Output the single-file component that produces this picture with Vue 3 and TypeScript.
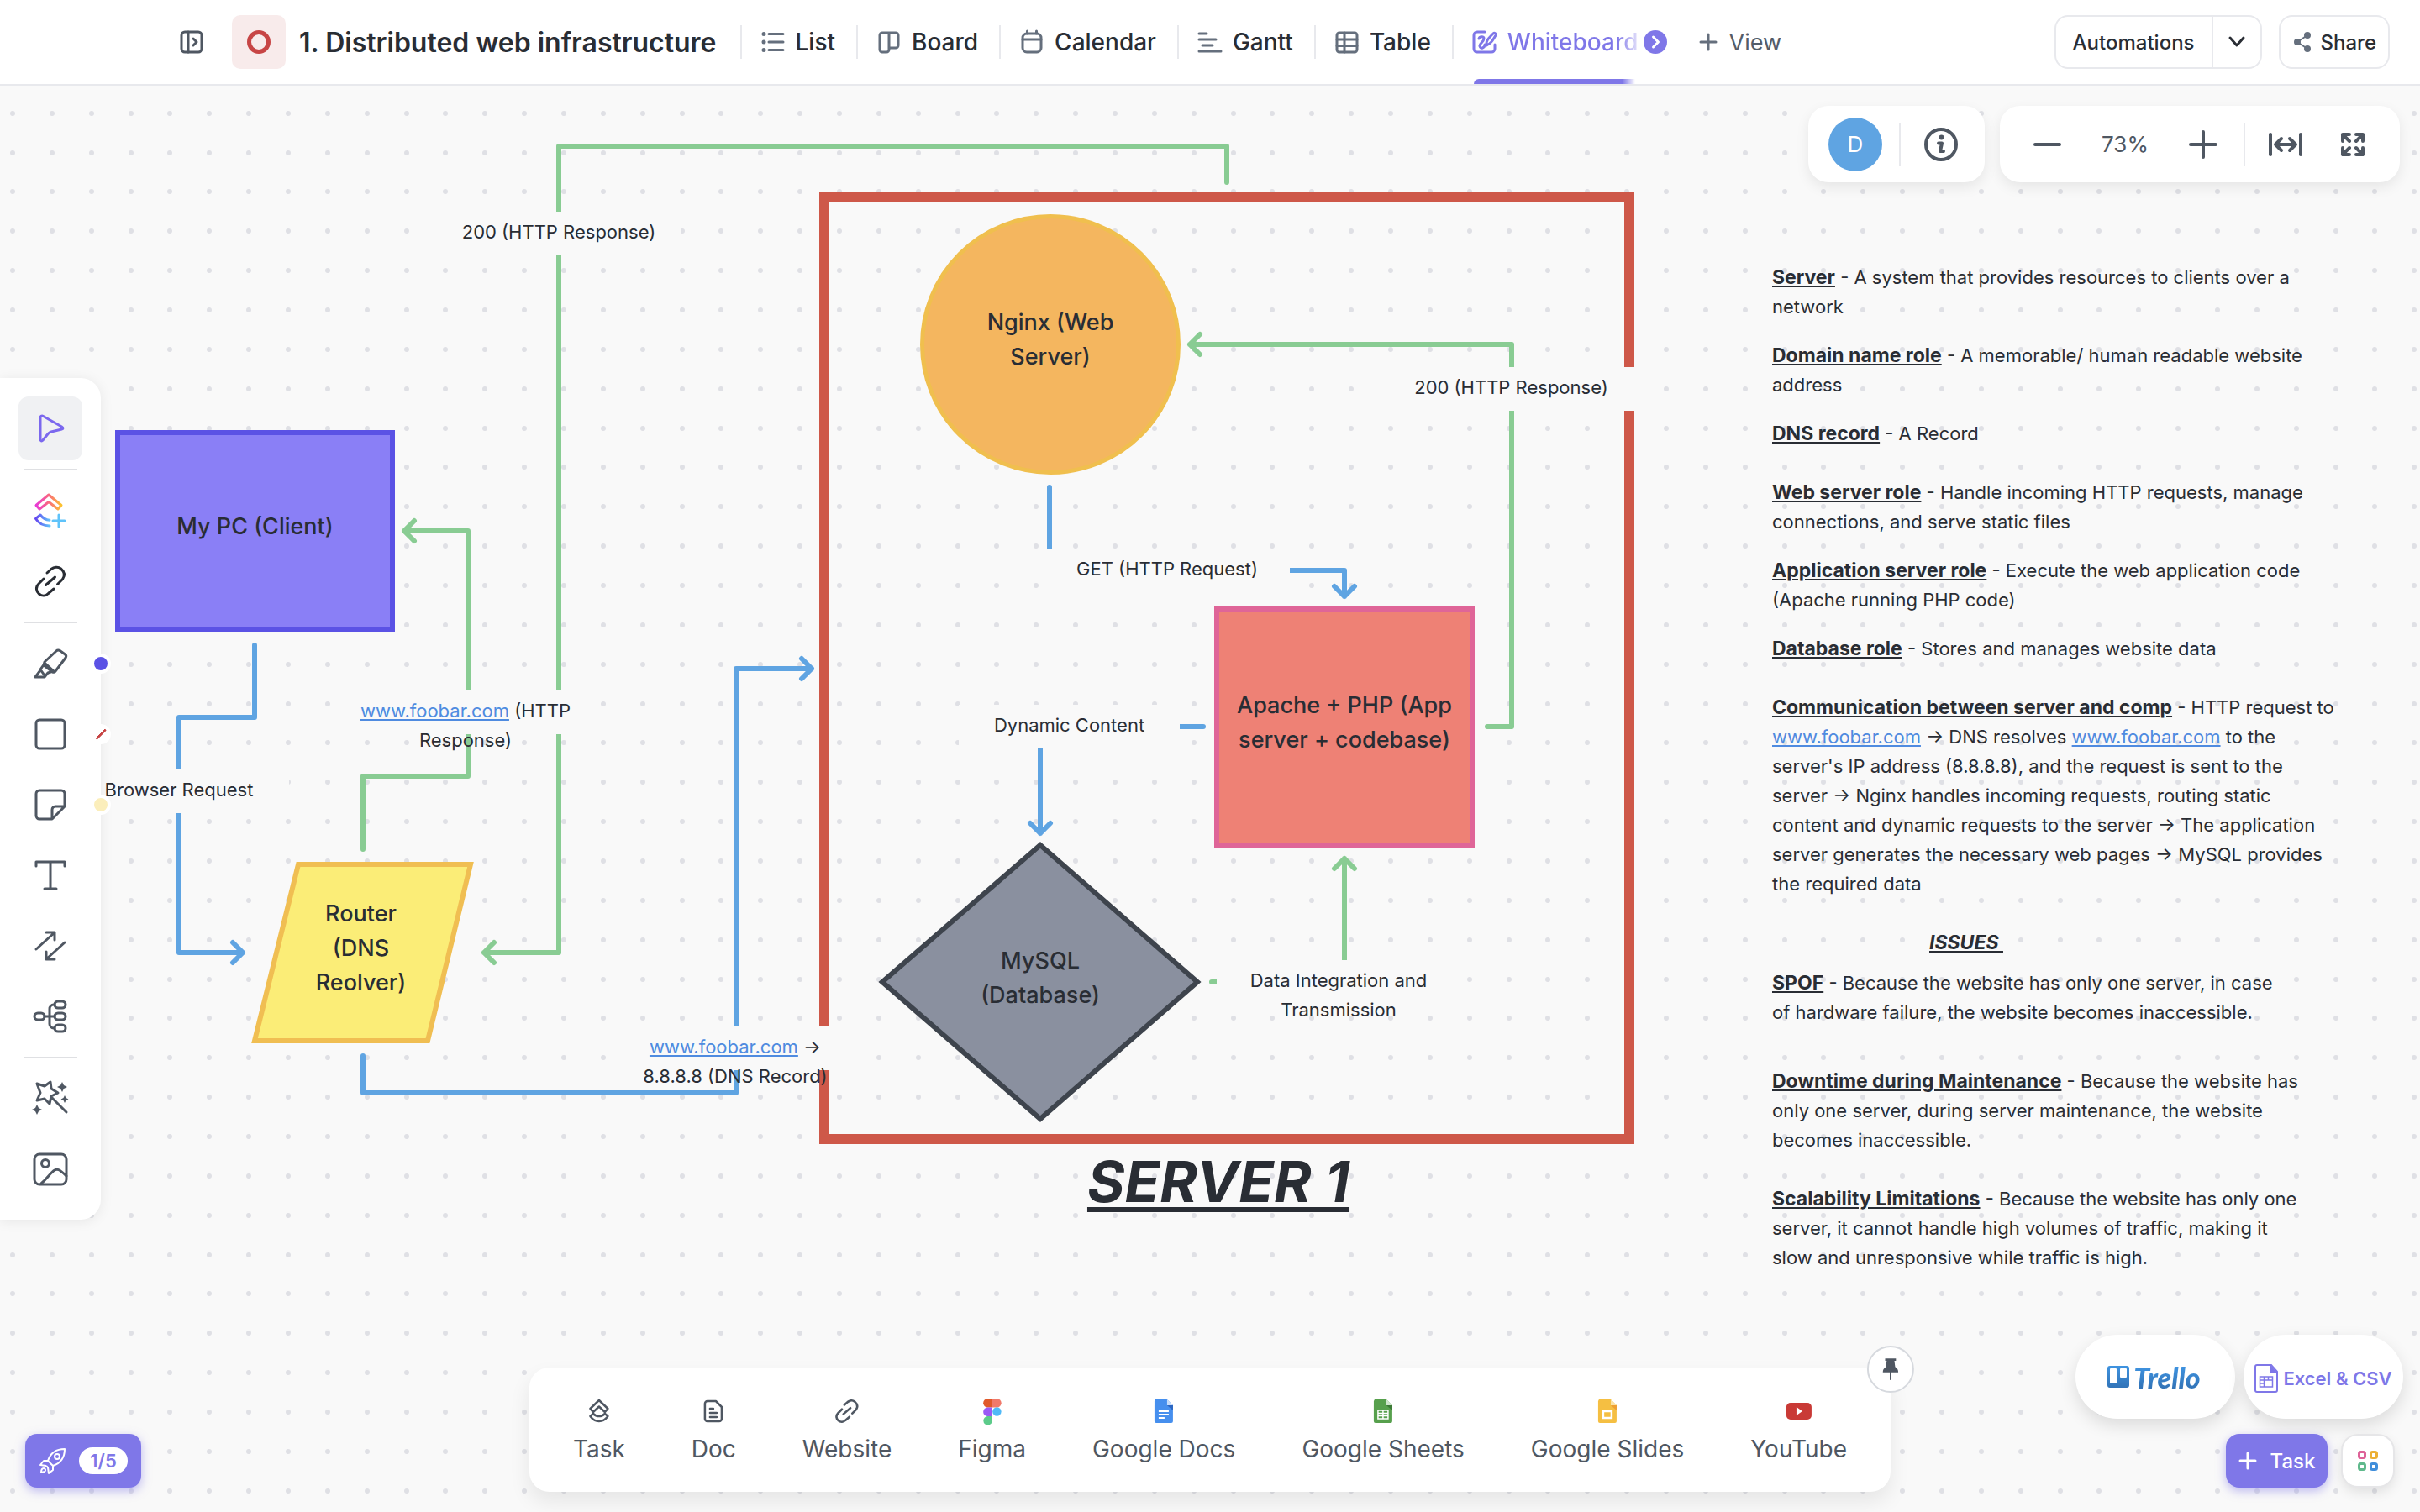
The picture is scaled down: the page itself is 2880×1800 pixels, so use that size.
<script setup lang="ts">
interface Tab {
  name: string
  icon: string
}

interface Label {
  x: number
  y: number
  w: number
  lines: { text: string; link?: boolean }[][]
}

interface Node {
  id: string
  x: number
  y: number
  w: number
  h: number
  lines: string[]
}

const tabs: Tab[] = [
  { name: 'List', icon: 'list' },
  { name: 'Board', icon: 'board' },
  { name: 'Calendar', icon: 'calendar' },
  { name: 'Gantt', icon: 'gantt' },
  { name: 'Table', icon: 'table' },
]

const tabIcons: Record<string, string> = {
  list: '<path d="M10 5.500h17M10 15h17M10 24.500h17"/><g fill="currentColor" stroke="none"><circle cx="4" cy="5.500" r="2.500"/><circle cx="4" cy="15" r="2.500"/><circle cx="4" cy="24.500" r="2.500"/></g>',
  board: '<path d="M7 4h16a3 3 0 0 1 3 3v12a3 3 0 0 1-3 3h-8v2a3 3 0 0 1-3 3H7a3 3 0 0 1-3-3V7a3 3 0 0 1 3-3zM15 4v18"/>',
  calendar: '<rect x="4" y="5" width="22" height="22" rx="5"/><path d="M4 12h22M9.500 2v3M20.500 2v3"/>',
  gantt: '<path d="M2 5h9M2 12h20M6 19h12M2 26h26"/>',
  table: '<rect x="3" y="4" width="24" height="23" rx="3"/><path d="M3 12h24M3 19.500h24M12 4v23"/>',
}

const tools: { name: string; group: number; swatch?: string }[] = [
  { name: 'select', group: 0 },
  { name: 'clickup', group: 1 },
  { name: 'link', group: 1 },
  { name: 'pen', group: 2, swatch: 'violet' },
  { name: 'shape', group: 2, swatch: 'none' },
  { name: 'note', group: 2, swatch: 'sand' },
  { name: 'text', group: 2 },
  { name: 'connector', group: 2 },
  { name: 'mindmap', group: 2 },
  { name: 'magic', group: 3 },
  { name: 'image', group: 3 },
]
const toolGroups = [0, 1, 2, 3].map((g) => tools.filter((t) => t.group === g))

const chain =
  '<path d="m16 10 5-4.500C24 3 29 2 32.500 5s5.500 7.500 2 12.500l-6 6M12 17l-6 6c-4 4-3 9 .5 12s8 2.500 11-.5l6.500-5.500M14.500 24.500l11-9.500"/>'

const toolIcons: Record<string, string> = {
  select: '<path stroke="#7b68ee" d="M8 7.500c0-2 1.500-3 3.500-2l22 12.500c2 1.200 2 2.500 0 3L21 24c-1.500.4-2.500 1-3.500 2L11 34c-1.300 1.500-3 1-3-1z"/>',
  clickup:
    '<defs><linearGradient id="cu-top" x1="0" x2="1"><stop stop-color="#e83ad6"/><stop offset=".5" stop-color="#f9687f"/><stop offset="1" stop-color="#fcc22f"/></linearGradient><linearGradient id="cu-low" x1="0" x2="1"><stop stop-color="#6647f0"/><stop offset="1" stop-color="#5fc3fa"/></linearGradient></defs><path stroke="url(#cu-top)" d="M3 13.500 18 1l15 12.500-4 4.500L18 9.500 7 18z"/><path stroke="url(#cu-low)" d="M19 38C12 38 6 35 2.500 29.500L8 25c3 4 6.500 6 11 6.200"/><path stroke="#5fc3fa" d="M30 25v14M23 32h14"/>',
  link: `<g stroke="#292d34">${chain}</g>`,
  pen: '<path d="m13 18 14-13c1-1 3-1.200 4.500-.4l6 4.400c1.500 1.200 1.500 2.600.6 4L26 29c-1 1.300-2.500 1.500-4 .6l-8-6c-1.500-1.300-1.800-3.700-1-5.600zM13 20l-5 7 5 7M8 28l-6 8h11l4-5 5-1.500M13 19l11 10"/>',
  shape: '<rect x="3" y="3" width="34" height="34" rx="4"/>',
  note: '<path d="M7 3h26a4 4 0 0 1 4 4v15L22 37H7a4 4 0 0 1-4-4V7a4 4 0 0 1 4-4zM22 36V26a4 4 0 0 1 4-4h10"/>',
  text: '<path d="M3 9V4h34v5M20 4v32M13 36h14"/>',
  connector: '<path d="M3 24 24 5M15 4h10v9M37 16 16 35M25 36H15v-9"/>',
  mindmap:
    '<rect x="1" y="16" width="12" height="8" rx="4"/><rect x="25" y="2" width="13" height="8" rx="4"/><rect x="25" y="16" width="13" height="8" rx="4"/><rect x="25" y="30" width="13" height="8" rx="4"/><path d="M13 20h12M25 6h-1a5 5 0 0 0-5 5v18a5 5 0 0 0 5 5h1"/>',
  magic:
    '<path d="m4 2 9 3 7-5 1 8 8 5-8 4-2 9-6-6-9 2 4-9zM22 19l17 17"/><g fill="#4f5762" stroke="none"><path d="m34 0 2 4 4 2-4 2-2 4-2-4-4-2 4-2zM37 16l1.500 3 3 1.500-3 1.500-1.500 3-1.500-3-3-1.500 3-1.500zM4 27l2 4 4 2-4 2-2 4-2-4-4-2 4-2z"/></g>',
  image: '<rect x="1" y="2" width="38" height="36" rx="6"/><circle cx="14" cy="13" r="4.500"/><path d="M9 37c8-7 11-13 16-16 3-2 6-1 14 7"/>',
}

const labels: Label[] = [
  { x: 519, y: 252, w: 292, lines: [[{ text: '200 (HTTP Response)' }]] },
  { x: 82, y: 916, w: 262, lines: [[{ text: 'Browser Request' }]] },
  {
    x: 410, y: 822, w: 288,
    lines: [[{ text: 'www.foobar.com', link: true }, { text: ' (HTTP' }], [{ text: 'Response)' }]],
  },
  {
    x: 730, y: 1222, w: 290,
    lines: [[{ text: 'www.foobar.com', link: true }, { text: ' →' }], [{ text: '8.8.8.8 (DNS Record)' }]],
  },
  { x: 1652, y: 437, w: 293, lines: [[{ text: '200 (HTTP Response)' }]] },
  { x: 1243, y: 653, w: 292, lines: [[{ text: 'GET (HTTP Request)' }]] },
  { x: 1141, y: 839, w: 263, lines: [[{ text: 'Dynamic Content' }]] },
  { x: 1448, y: 1143, w: 290, lines: [[{ text: 'Data Integration and' }], [{ text: 'Transmission' }]] },
]

const nodes: Node[] = [
  { id: 'client', x: 137, y: 512, w: 333, h: 240, lines: ['My PC (Client)'] },
  { id: 'nginx', x: 1095, y: 255, w: 310, h: 310, lines: ['Nginx (Web', 'Server)'] },
  { id: 'apache', x: 1445, y: 722, w: 310, h: 287, lines: ['Apache + PHP (App', 'server + codebase)'] },
  { id: 'router', x: 297, y: 1026, w: 265, h: 216, lines: ['Router', '(DNS', 'Reolver)'] },
  { id: 'mysql', x: 1046, y: 1002, w: 384, h: 336, lines: ['MySQL', '(Database)'] },
]

const bluePaths = [
  'M303 768V854H213V1134H289M277 1122l12 12-12 12',
  'M432 1257V1301H876V796H966M954 784l12 12-12 12',
  'M1249 580V679H1600V710M1588 698l12 12 12-12',
  'M1432 865H1238V992M1226 980l12 12 12-12',
]
const greenPaths = [
  'M432 1011V924H557V632H481M493 620l-12 12 12 12',
  'M1460 217V174H665V1134H576M588 1122l-12 12 12 12',
  'M1770 865H1799V410H1416M1428 398l-12 12 12 12',
  'M1442 1169H1600V1022M1588 1034l12-12 12 12',
]

// One tile of the grid holds 7 × 7 dots.
const dotSteps = [0, 47, 94, 141, 187, 234, 281]
const dots = dotSteps.flatMap((y) => dotSteps.map((x) => ({ x: x + 15, y: y + 41 })))

const shortcuts: { name: string; icon: string }[] = [
  {
    name: 'Task',
    icon: '<g fill="none" stroke="#4f5762" stroke-width="2.500" stroke-linejoin="round" stroke-linecap="round"><path d="M4.500 12 15 2l10.500 10-3.500 4-7-6.500L8 16z"/><path d="m4.500 21 3.500-3c4 4 10 4 14 0l3.500 3c-6 8-15 8-21 0z"/></g>',
  },
  {
    name: 'Doc',
    icon: '<g fill="none" stroke="#4f5762" stroke-width="2.500" stroke-linejoin="round" stroke-linecap="round"><path d="M8 3h10l7 7v14a3 3 0 0 1-3 3H8a3 3 0 0 1-3-3V6a3 3 0 0 1 3-3zM11 12h4M11 17h8M11 22h8"/></g>',
  },
  {
    name: 'Website',
    icon: `<g fill="none" stroke="#4f5762" stroke-width="3.500" stroke-linecap="round" transform="scale(.75)">${chain}</g>`,
  },
  {
    name: 'Figma',
    icon: '<path fill="#e0592a" d="M15 0H9.500a5.200 5.200 0 0 0 0 10.500H15z"/><path fill="#f0796a" d="M15 0h5.500a5.200 5.200 0 0 1 0 10.500H15z"/><path fill="#9a59f5" d="M15 10.500H9.500a5.200 5.200 0 0 0 0 10.500H15z"/><circle cx="20.500" cy="15.500" r="5.200" fill="#4fb9f7"/><path fill="#5ccb8a" d="M9.500 21H15v5a5.300 5.300 0 1 1-5.500-5z"/>',
  },
  {
    name: 'Google Docs',
    icon: '<path fill="#468fee" d="M5 1h14l7 7v19a2 2 0 0 1-2 2H6a2 2 0 0 1-2-2V3z"/><path fill="#c7dcfa" d="M19 1l7 7h-7z"/><path fill="#2c66c2" d="M19 8h7v6z"/><path stroke="#fff" stroke-width="2" d="M9 15h12M9 19h12M9 23h7"/>',
  },
  {
    name: 'Google Sheets',
    icon: '<path fill="#57a04d" d="M5 1h14l7 7v19a2 2 0 0 1-2 2H6a2 2 0 0 1-2-2V3z"/><path fill="#cfe5cc" d="M19 1l7 7h-7z"/><path fill="#3c7a36" d="M19 8h7v6z"/><path fill="none" stroke="#fff" stroke-width="1.500" d="M9 14h12v10H9zM9 17.500h12M9 20.500h12M15 14v10"/>',
  },
  {
    name: 'Google Slides',
    icon: '<path fill="#f5bf42" d="M5 1h14l7 7v19a2 2 0 0 1-2 2H6a2 2 0 0 1-2-2V3z"/><path fill="#fbe3a8" d="M19 1l7 7h-7z"/><path fill="#ee9f33" d="M19 8h7v6z"/><rect x="10" y="15" width="10" height="8" fill="none" stroke="#fff" stroke-width="2.500"/>',
  },
  {
    name: 'YouTube',
    icon: '<rect x="0" y="5" width="30" height="20" rx="5" fill="#c93a36"/><path fill="#fff" d="M12 10l7 5-7 5z"/>',
  },
]
</script>

<template>
  <div class="app">
    <main class="board">
      <svg class="drawing" aria-hidden="true">
        <defs>
          <pattern id="dot-grid" width="328" height="328" patternUnits="userSpaceOnUse">
            <circle v-for="(d, i) in dots" :key="i" :cx="d.x" :cy="d.y" r="3" fill="#dfe0e5" />
          </pattern>
        </defs>
        <rect width="100%" height="100%" fill="url(#dot-grid)" />
        <rect x="981" y="235" width="958" height="1121" class="frame" />
        <g class="wire blue"><path v-for="p in bluePaths" :key="p" :d="p" /></g>
        <g class="wire green"><path v-for="p in greenPaths" :key="p" :d="p" /></g>
        <polygon class="router" points="355,1029 560,1029 509,1239 303,1239" />
        <polygon class="mysql" points="1238,1006 1425,1169 1238,1332 1050,1169" />
      </svg>

      <div
        v-for="n in nodes"
        :key="n.id"
        :class="['node', n.id]"
        :style="{ left: n.x + 'px', top: n.y + 'px', width: n.w + 'px', height: n.h + 'px' }"
      >
        <span v-for="l in n.lines" :key="l">{{ l }}</span>
      </div>

      <div
        v-for="(label, i) in labels"
        :key="i"
        class="label"
        :style="{ left: label.x + 'px', top: label.y + 'px', width: label.w + 'px' }"
      >
        <span v-for="(line, j) in label.lines" :key="j" class="line">
          <template v-for="part in line" :key="part.text">
            <a v-if="part.link" href="#">{{ part.text }}</a>
            <template v-else>{{ part.text }}</template>
          </template>
        </span>
      </div>

      <h2 class="server-name">SERVER 1</h2>

      <article class="notes">
        <section>
          <p><b>Server</b> - A system that provides resources to clients over a<br />network</p>
          <p><b>Domain name role</b> - A memorable/ human readable website<br />address</p>
          <p><b>DNS record</b> - A Record</p>
        </section>
        <section>
          <p><b>Web server role</b> - Handle incoming HTTP requests, manage<br />connections, and serve static files</p>
          <p><b>Application server role</b> - Execute the web application code<br />(Apache running PHP code)</p>
          <p><b>Database role</b> - Stores and manages website data</p>
        </section>
        <section>
          <p>
            <b>Communication between server and comp</b> - HTTP request to<br />
            <a href="#">www.foobar.com</a> → DNS resolves <a href="#">www.foobar.com</a> to the<br />
            server's IP address (8.8.8.8), and the request is sent to the<br />
            server → Nginx handles incoming requests, routing static<br />
            content and dynamic requests to the server → The application<br />
            server generates the necessary web pages → MySQL provides<br />
            the required data
          </p>
        </section>
        <section class="issues">
          <h3>ISSUES&nbsp;</h3>
          <p><b>SPOF</b> - Because the website has only one server, in case<br />of hardware failure, the website becomes inaccessible.</p>
        </section>
        <section class="later">
          <p><b>Downtime during Maintenance</b> - Because the website has<br />only one server, during server maintenance, the website<br />becomes inaccessible.</p>
        </section>
        <section>
          <p><b>Scalability Limitations</b> - Because the website has only one<br />server, it cannot handle high volumes of traffic, making it<br />slow and unresponsive while traffic is high.</p>
        </section>
      </article>
    </main>

    <header class="topbar">
      <button class="plain toggle" aria-label="Open sidebar">
        <svg viewBox="0 0 30 30"><rect x="3" y="3" width="24" height="24" rx="4" /><path d="M11 3v24M17 11l4 4-4 4" /></svg>
      </button>
      <button class="status" aria-label="List colour"><span></span></button>
      <h1>1. Distributed web infrastructure</h1>
      <nav class="tabs">
        <a v-for="t in tabs" :key="t.name" href="#" class="tab">
          <svg viewBox="0 0 30 30" v-html="tabIcons[t.icon]"></svg>{{ t.name }}
        </a>
        <a href="#" class="tab active">
          <svg viewBox="0 0 30 30">
            <path d="M15 3H6a4 4 0 0 0-4 4v16a4 4 0 0 0 4 4h17a4 4 0 0 0 4-4v-5" />
            <path d="M8 11c1-3 6-3 6 0 0 4-6 6-5 9 1 4 6 2 6-2M17 19c-1-5 2-8 8-14 1.500-1.500 4 0 3 2-4 7-6 10-11 12z" />
          </svg><span class="fade">Whiteboard</span>
        </a>
      </nav>
      <button class="next" aria-label="More views">
        <svg viewBox="0 0 28 28"><path d="m11.500 8 6 6-6 6" /></svg>
      </button>
      <button class="plain add-view">
        <svg viewBox="0 0 22 22"><path d="M11 2v18M2 11h18" /></svg>View
      </button>
      <div class="actions">
        <div class="split">
          <button>Automations</button>
          <button class="drop" aria-label="Automation menu">
            <svg viewBox="0 0 22 14"><path d="m3 2 8 9 8-9" /></svg>
          </button>
        </div>
        <button class="share">
          <svg viewBox="0 0 24 26">
            <path d="M18 5 6 13l12 8" fill="none" stroke-width="2" />
            <g class="knots"><circle cx="18" cy="5" r="4" /><circle cx="6" cy="13" r="4" /><circle cx="18" cy="21" r="4" /></g>
          </svg>Share
        </button>
      </div>
    </header>

    <div class="controls">
      <div class="panel people">
        <button class="avatar">D</button>
        <i class="rule"></i>
        <button class="plain" aria-label="Info">
          <svg viewBox="0 0 40 40"><circle cx="20" cy="20" r="18" /><path d="M17 18.500h4l-2 9.500h4" /><circle cx="20.500" cy="11.500" r="3" fill="#4f5762" stroke="none" /></svg>
        </button>
      </div>
      <div class="panel zoom">
        <button class="plain" aria-label="Zoom out"><svg viewBox="0 0 40 40"><path d="M6 20h29" /></svg></button>
        <span class="percent">73%</span>
        <button class="plain" aria-label="Zoom in"><svg viewBox="0 0 40 40"><path d="M20 5v30M5 20h30" /></svg></button>
        <i class="rule"></i>
        <button class="plain fit" aria-label="Fit width">
          <svg viewBox="0 0 40 40"><path d="M2 8v24M38 8v24M8 20h24M15 13l-7 7 7 7M25 13l7 7-7 7" /></svg>
        </button>
        <button class="plain fit" aria-label="Fit all">
          <svg viewBox="0 0 40 40"><path d="M8 16V8h8M8 8l8 8M24 8h8v8M32 8l-8 8M8 24v8h8M8 32l8-8M32 24v8h-8M32 32l-8-8" /></svg>
        </button>
      </div>
    </div>

    <aside class="toolbar">
      <template v-for="(group, g) in toolGroups" :key="g">
        <hr v-if="g" />
        <button v-for="t in group" :key="t.name" :class="{ selected: t.name === 'select' }" :aria-label="t.name">
          <svg viewBox="0 0 40 40" v-html="toolIcons[t.name]"></svg>
          <span v-if="t.swatch" :class="['swatch', t.swatch]"></span>
        </button>
      </template>
    </aside>

    <div class="dock">
      <button v-for="s in shortcuts" :key="s.name" class="plain">
        <svg viewBox="0 0 30 30" v-html="s.icon"></svg>{{ s.name }}
      </button>
      <button class="pin" aria-label="Pin bar">
        <svg viewBox="0 0 24 30"><path d="M5 1h14v3h-2l1 8c3 2 4 4 4 7H2c0-3 1-5 4-7l1-8H5z" fill="#4f5762" /><path d="M12 18v11" stroke="#4f5762" stroke-width="2" /></svg>
      </button>
    </div>

    <button class="onboard">
      <svg viewBox="0 0 34 34">
        <path d="M11 17C14 8 20 3 31 3c0 11-5 17-14 20zM11 17H6l-4 5 7 1M17 23v5l-5 4-1-7M9 23l2 2M3 31c0-3 1-5 3-5s3 3 1 4z" /><circle cx="22" cy="12" r="3" />
      </svg>
      <span>1/5</span>
    </button>

    <div class="corner">
      <div class="imports">
        <button class="import trello">
          <svg viewBox="0 0 28 28">
            <defs><linearGradient id="trello-blue" x2="0" y2="1"><stop stop-color="#3f93e0" /><stop offset="1" stop-color="#3274b8" /></linearGradient></defs>
            <path fill="url(#trello-blue)" fill-rule="evenodd" d="M4 1h20a3 3 0 0 1 3 3v20a3 3 0 0 1-3 3H4a3 3 0 0 1-3-3V4a3 3 0 0 1 3-3zm1 3a1 1 0 0 0-1 1v16a1 1 0 0 0 1 1h6a1 1 0 0 0 1-1V5a1 1 0 0 0-1-1zm12 0a1 1 0 0 0-1 1v9a1 1 0 0 0 1 1h6a1 1 0 0 0 1-1V5a1 1 0 0 0-1-1z" />
          </svg><span>Trello</span>
        </button>
        <button class="import excel">
          <svg viewBox="0 0 28 34">
            <path d="M3 1h17l7 8v22a2 2 0 0 1-2 2H3a2 2 0 0 1-2-2V3a2 2 0 0 1 2-2z" fill="none" stroke="#7f77e8" stroke-width="2" />
            <path d="M19 1v9h8z" fill="#7f77e8" /><path d="M6.500 15h15v12h-15zM6.500 19h15M11.500 15v12M16.500 15v4M6.500 23h5" fill="none" stroke="#7f77e8" stroke-width="1.500" />
          </svg>Excel &amp; CSV
        </button>
      </div>
      <div class="quick">
        <button class="new-task"><svg viewBox="0 0 22 22"><path d="M11 2v18M2 11h18" /></svg>Task</button>
        <button class="apps" aria-label="Quick actions">
          <svg viewBox="0 0 24 24"><rect x="1.500" y="1.500" width="7" height="7" rx="2" stroke="#de6298" /><rect x="15.500" y="1.500" width="7" height="7" rx="2" stroke="#ecb035" /><rect x="1.500" y="15.500" width="7" height="7" rx="2" stroke="#5fb98c" /><rect x="15.500" y="15.500" width="7" height="7" rx="2" stroke="#3f8edb" /></svg>
        </button>
      </div>
    </div>
  </div>
</template>

<style>
body {
  margin: 0;
  background: #f9f9f9;
}
</style>

<style scoped>
* {
  box-sizing: border-box;
}
.app {
  position: relative;
  min-height: 100vh;
  overflow: hidden;
  font-family: Inter, "Liberation Sans", sans-serif;
  color: #292d34;
}
button {
  display: flex;
  align-items: center;
  justify-content: center;
  padding: 0;
  border: 0;
  background: none;
  font: inherit;
  color: inherit;
}
svg {
  flex: none;
  overflow: visible;
}
a {
  color: #4f8be0;
}
h1, h2, h3, p {
  margin: 0;
}

/* Header */
.topbar {
  position: relative;
  display: flex;
  align-items: center;
  height: 102px;
  padding: 0 36px 0 213px;
  background: #fff;
  border-bottom: 2px solid #e8e9ed;
}
.topbar svg {
  fill: none;
  stroke: #656f7d;
  stroke-width: 3;
  stroke-linecap: round;
  stroke-linejoin: round;
}
.toggle svg {
  width: 30px;
  height: 30px;
  stroke: #4f5762;
}
.status {
  width: 64px;
  height: 64px;
  margin: 0 16px 0 33px;
  border-radius: 10px;
  background: #f8ebeb;
}
.status span {
  width: 28px;
  height: 28px;
  border: 5px solid #c74545;
  border-radius: 50%;
}
h1 {
  font-size: 32px;
  font-weight: 600;
  white-space: nowrap;
  margin-right: 28px;
}
.tabs {
  display: flex;
  align-self: stretch;
  align-items: center;
}
.tab {
  position: relative;
  display: flex;
  align-items: center;
  height: 40px;
  gap: 12px;
  padding: 0 25px 0 22px;
  border-left: 2px solid #e8e9ed;
  color: #292d34;
  font-size: 28px;
  font-weight: 500;
  text-decoration: none;
  white-space: nowrap;
}
.tab svg {
  width: 30px;
  height: 30px;
  color: #656f7d;
}
.tab.active {
  padding-right: 6px;
}
.tab.active svg {
  stroke: #7f77e8;
}
.tab.active::after {
  content: "";
  position: absolute;
  left: 24px;
  right: 10px;
  bottom: -30px;
  height: 6px;
  border-radius: 6px 0 0 0;
  background: linear-gradient(90deg, #7f77e8 92%, transparent);
}
.fade {
  background: linear-gradient(90deg, #7f77e8 84%, #e6e4fb);
  background-clip: text;
  color: transparent;
}
.next {
  width: 28px;
  height: 28px;
  margin-right: 38px;
  border-radius: 50%;
  background: #7f77e8;
}
.topbar .next svg {
  width: 28px;
  height: 28px;
  stroke: #fff;
}
.add-view {
  gap: 14px;
  color: #545d69;
  font-size: 27px;
}
.add-view svg {
  width: 22px;
  height: 22px;
}
.actions {
  display: flex;
  gap: 20px;
  margin-left: auto;
  font-size: 24px;
  font-weight: 500;
}
.split {
  display: flex;
  border: 2px solid #e8e9ed;
  border-radius: 16px;
}
.split button {
  height: 60px;
  padding: 0 20px;
}
.split .drop {
  width: 58px;
  padding: 0;
  border-left: 2px solid #e8e9ed;
}
.drop svg {
  width: 22px;
  height: 14px;
  stroke: #292d34;
}
.share {
  height: 64px;
  gap: 10px;
  padding: 0 14px;
  border: 2px solid #e8e9ed;
  border-radius: 16px;
}
.share svg {
  width: 24px;
  height: 26px;
}
.knots {
  fill: #656f7d;
  stroke: none;
}

/* Floating controls */
.controls {
  position: absolute;
  top: 126px;
  right: 24px;
  display: flex;
  gap: 18px;
}
.panel {
  display: flex;
  align-items: center;
  height: 91px;
  border-radius: 24px;
  background: #fff;
  box-shadow: 0 6px 16px rgba(0, 0, 0, 0.08);
}
.panel svg {
  width: 40px;
  height: 40px;
  fill: none;
  stroke: #4f5762;
  stroke-width: 4;
  stroke-linecap: round;
  stroke-linejoin: round;
}
.people {
  gap: 20px;
  padding: 0 32px 0 24px;
}
.people .plain {
  margin-left: 8px;
}
.avatar {
  width: 64px;
  height: 64px;
  border-radius: 50%;
  background: #5fa4e2;
  color: #fff;
  font-size: 26px;
}
.rule {
  width: 2px;
  height: 52px;
  background: #e8e9ed;
}
.zoom {
  padding: 0 36px 0 36px;
}
.percent {
  width: 146px;
  color: #4f5762;
  font-size: 26px;
  text-align: center;
}
.zoom .rule {
  margin: 0 28px;
}
.fit + .fit {
  margin-left: 40px;
}

/* Drawing tools */
.toolbar {
  position: absolute;
  top: 450px;
  left: 0;
  display: flex;
  flex-direction: column;
  align-items: center;
  gap: 8px;
  width: 120px;
  padding: 22px 0;
  border-radius: 0 24px 24px 0;
  background: #fff;
  box-shadow: 0 2px 16px rgba(0, 0, 0, 0.08);
}
.toolbar hr {
  width: 64px;
  height: 2px;
  margin: 2px 0;
  border: 0;
  background: #dfe0e3;
}
.toolbar button {
  position: relative;
  width: 76px;
  height: 76px;
  border-radius: 12px;
}
.toolbar .selected {
  background: #f0f1f3;
}
.toolbar svg {
  width: 40px;
  height: 40px;
  fill: none;
  stroke: #4f5762;
  stroke-width: 3;
  stroke-linecap: round;
  stroke-linejoin: round;
}
.swatch {
  position: absolute;
  right: -34px;
  width: 24px;
  height: 24px;
  border: 4px solid #fff;
  border-radius: 50%;
}
.violet {
  background: #5b52e5;
}
.sand {
  background: #fbeebb;
}
.none {
  background: linear-gradient(135deg, #fff 45%, #c74545 46%, #c74545 56%, #fff 57%);
}

/* Whiteboard */
.board {
  position: absolute;
  inset: 0;
  background: #f9f9f9;
}
.drawing {
  position: absolute;
  inset: 0;
  width: 100%;
  height: 100%;
}
.frame {
  fill: none;
  stroke: #ce5849;
  stroke-width: 12;
}
.wire {
  fill: none;
  stroke-width: 6;
  stroke-linecap: round;
  stroke-linejoin: round;
}
.blue {
  stroke: #5fa4e2;
}
.green {
  stroke: #89cc93;
}
polygon {
  stroke-width: 6;
}
polygon.router {
  fill: #fbed77;
  stroke: #f0be52;
}
polygon.mysql {
  fill: #8a909f;
  stroke: #3e444d;
}
.node {
  position: absolute;
  display: flex;
  flex-direction: column;
  align-items: center;
  justify-content: center;
  padding-bottom: 12px;
  font-size: 27px;
  font-weight: 500;
  line-height: 41px;
  white-space: nowrap;
}
.node.client {
  border: 6px solid #5b52e5;
  background: #8a7ff6;
}
.node.nginx {
  border: 5px solid #f0bf4e;
  border-radius: 50%;
  background: #f4b65f;
}
.node.apache {
  border: 6px solid #df6598;
  background: #ee8175;
}
.label {
  position: absolute;
  height: 52px;
  padding-top: 7px;
  background: #f9f9f9;
  font-size: 22px;
  line-height: 35px;
  text-align: center;
  white-space: nowrap;
}
.line {
  display: block;
}
.server-name {
  position: absolute;
  left: 975px;
  top: 1364px;
  width: 950px;
  font-size: 68px;
  font-style: italic;
  font-weight: 700;
  line-height: 84px;
  text-align: center;
  text-decoration: underline;
  text-decoration-thickness: 6px;
  text-underline-offset: 6px;
  text-decoration-skip-ink: none;
}
.notes {
  position: absolute;
  left: 2109px;
  top: 313px;
  display: flex;
  flex-direction: column;
  gap: 35px;
  font-size: 22px;
  line-height: 35px;
  white-space: nowrap;
}
.notes section {
  display: flex;
  flex-direction: column;
  gap: 23px;
}
.notes b {
  font-size: 23px;
  font-weight: 700;
  line-height: 1;
  text-decoration: underline;
}
.notes .issues {
  gap: 13px;
}
.issues h3 {
  padding-left: 187px;
  font-size: 23px;
  font-style: italic;
  font-weight: 700;
  text-decoration: underline;
}
.notes .later {
  margin-top: 12px;
}

/* Shortcut dock */
.dock {
  position: absolute;
  left: 50%;
  bottom: 24px;
  display: flex;
  gap: 79px;
  height: 148px;
  padding: 3px 52px 0;
  border-radius: 24px;
  background: #fff;
  box-shadow: 0 12px 24px rgba(0, 0, 0, 0.08);
  transform: translateX(-50%);
}
.dock .plain {
  flex-direction: column;
  gap: 12px;
  color: #4f5762;
  font-size: 28px;
  line-height: 36px;
  white-space: nowrap;
}
.dock .plain svg {
  width: 30px;
  height: 30px;
}
.pin {
  position: absolute;
  top: -26px;
  right: -28px;
  width: 56px;
  height: 56px;
  border: 2px solid #d6d9de;
  border-radius: 50%;
  background: #fff;
}
.pin svg {
  width: 22px;
  height: 28px;
}

/* Corner buttons */
.onboard {
  position: absolute;
  left: 30px;
  bottom: 29px;
  gap: 14px;
  width: 138px;
  height: 64px;
  border-radius: 14px;
  background: #7f77e8;
  box-shadow: 0 4px 12px rgba(127, 119, 232, 0.5);
}
.onboard svg {
  width: 34px;
  height: 34px;
  fill: none;
  stroke: #fff;
  stroke-width: 2;
  stroke-linejoin: round;
}
.onboard span {
  width: 58px;
  border-radius: 16px;
  background: #fff;
  color: #7f77e8;
  font-size: 22px;
  font-weight: 600;
  line-height: 32px;
}
.corner {
  position: absolute;
  right: 20px;
  bottom: 29px;
  display: flex;
  flex-direction: column;
  align-items: flex-end;
  gap: 18px;
}
.imports {
  display: flex;
  gap: 10px;
}
.import {
  width: 190px;
  height: 100px;
  border-radius: 50px;
  background: #fff;
  box-shadow: 0 8px 20px rgba(0, 0, 0, 0.12);
}
.trello {
  gap: 4px;
}
.trello svg {
  width: 28px;
  height: 28px;
}
.trello span {
  padding-right: 4px;
  background: linear-gradient(#3f93e0 20%, #3274b8 80%);
  background-clip: text;
  color: transparent;
  font-family: Lato, sans-serif;
  font-size: 34px;
  font-style: italic;
  font-weight: 900;
}
.excel {
  gap: 6px;
  padding-top: 4px;
  color: #7f77e8;
  font-size: 22px;
  font-weight: 600;
}
.excel svg {
  width: 28px;
  height: 34px;
}
.quick {
  display: flex;
  align-items: center;
  gap: 18px;
  padding-right: 12px;
}
.new-task {
  gap: 16px;
  width: 121px;
  height: 64px;
  border-radius: 16px;
  background: #7f77e8;
  box-shadow: 0 4px 12px rgba(127, 119, 232, 0.5);
  color: #fff;
  font-size: 24px;
  font-weight: 500;
}
.new-task svg {
  width: 22px;
  height: 22px;
  stroke: #fff;
  stroke-width: 3;
  stroke-linecap: round;
}
.apps {
  width: 60px;
  height: 60px;
  border-radius: 18px;
  background: #fff;
  box-shadow: 0 0 0 2px #e6e6e8, 0 6px 16px rgba(0, 0, 0, 0.12);
}
.apps svg {
  width: 24px;
  height: 24px;
  fill: none;
  stroke-width: 3;
}
</style>
